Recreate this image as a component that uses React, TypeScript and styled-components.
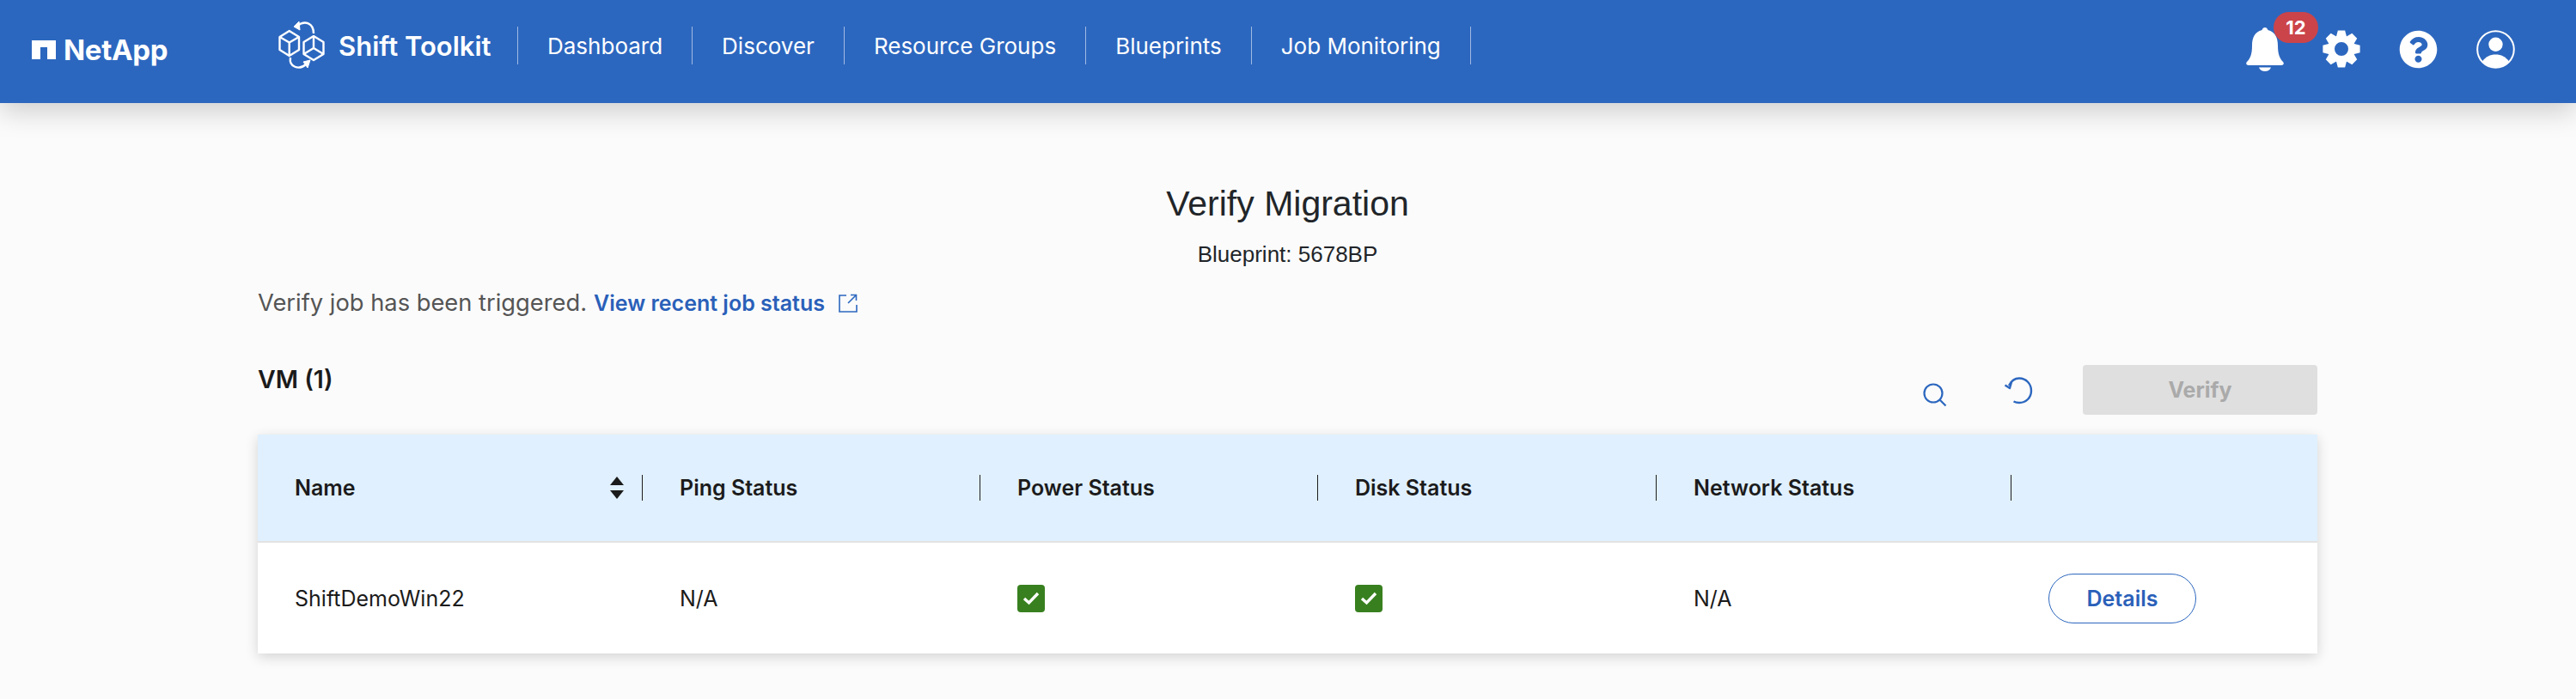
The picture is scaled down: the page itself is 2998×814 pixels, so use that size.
import React from "react";
import styled, { createGlobalStyle } from "styled-components";
import { FaQuestionCircle } from "react-icons/fa";

const BLUE = "#2c67bf";

const GlobalStyle = createGlobalStyle`
  html, body {
    margin: 0;
    padding: 0;
    background: #fbfbfb;
    font-family: Inter, "Liberation Sans", sans-serif;
  }
`;

const Header = styled.header`
  position: relative;
  display: flex;
  align-items: center;
  height: 120px;
  box-sizing: border-box;
  padding: 0 71px 14px 37px;
  background: ${BLUE};
  color: #fff;
  box-shadow: 0 10px 30px rgba(0, 0, 0, 0.18);
`;

const Logo = styled.div`
  display: flex;
  align-items: center;
  gap: 9px;
  width: 278px;
  margin-top: 10px;
`;

const LogoWord = styled.span`
  font-size: 33px;
  font-weight: 700;
  letter-spacing: -0.3px;
  line-height: 44px;
`;

const Brand = styled.div`
  display: flex;
  align-items: center;
  width: 287px;
  height: 44px;
  border-right: 1px solid rgba(255, 255, 255, 0.55);
`;

const BrandName = styled.span`
  margin-left: 4px;
  font-size: 31px;
  font-weight: 600;
  white-space: nowrap;
`;

const Nav = styled.nav`
  display: flex;
`;

const NavItem = styled.a`
  display: flex;
  align-items: center;
  height: 44px;
  padding: 0 34px;
  border-right: 1px solid rgba(255, 255, 255, 0.55);
  font-size: 26px;
  white-space: nowrap;
`;

const HeaderIcons = styled.div`
  display: flex;
  align-items: center;
  gap: 45px;
  margin-left: auto;
  padding-top: 8px;
`;

const BellWrap = styled.div`
  position: relative;
  display: flex;
`;

const Badge = styled.span`
  position: absolute;
  left: 32px;
  top: -18px;
  display: flex;
  align-items: center;
  justify-content: center;
  width: 52px;
  height: 36px;
  border-radius: 18px;
  background: #cb444a;
  font-size: 22px;
  font-weight: 700;
`;

const Main = styled.main`
  padding: 0 301px 54px 300px;
`;

const TitleBlock = styled.div`
  display: flex;
  flex-direction: column;
  align-items: center;
  padding-top: 90px;
`;

const Title = styled.h1`
  margin: 0;
  font-family: "Liberation Sans", Arial, sans-serif;
  font-size: 41px;
  font-weight: 400;
  line-height: 54px;
  color: #212529;
`;

const SubTitle = styled.div`
  margin-top: 17px;
  font-family: "Liberation Sans", Arial, sans-serif;
  font-size: 26px;
  line-height: 30px;
  color: #212529;
`;

const Notice = styled.div`
  display: flex;
  align-items: center;
  margin-top: 24px;
  font-size: 27.3px;
  line-height: 36px;
  color: #555;
`;

const JobLink = styled.a`
  margin-left: 8px;
  font-size: 25px;
  font-weight: 600;
  color: #2a60b9;
`;

const LinkIcon = styled.svg`
  margin-left: 16px;
`;

const ToolRow = styled.div`
  display: flex;
  justify-content: space-between;
  height: 82px;
  margin-top: 54px;
`;

const SectionName = styled.div`
  margin-top: -1px;
  font-size: 28.5px;
  font-weight: 600;
  line-height: 36px;
  color: #1b1b1b;
`;

const Tools = styled.div`
  display: flex;
  align-items: flex-start;
`;

const ToolIcon = styled.svg<{ $top: number; $right: number }>`
  margin-top: ${(p) => p.$top}px;
  margin-right: ${(p) => p.$right}px;
`;

const VerifyButton = styled.button`
  width: 273px;
  height: 58px;
  border: none;
  border-radius: 4px;
  background: #dfdfdf;
  color: #aaa;
  font-family: inherit;
  font-size: 25px;
  font-weight: 700;
`;

const Table = styled.div`
  margin-top: -1px;
  background: #fff;
  box-shadow: 0 4px 14px rgba(0, 0, 0, 0.16);
`;

const Row = styled.div<{ $head?: boolean }>`
  display: grid;
  grid-template-columns: 448px 393px 393px 394px 413px 1fr;
  align-items: center;
  box-sizing: border-box;
  height: ${(p) => (p.$head ? "126px" : "129px")};
  background: ${(p) => (p.$head ? "#e0f0fe" : "#fff")};
  border-bottom: ${(p) => (p.$head ? "2px solid #e3e3e3" : "none")};
`;

const HeadCell = styled.div`
  position: relative;
  display: flex;
  align-items: center;
  justify-content: space-between;
  box-sizing: border-box;
  height: 30px;
  padding: 0 20px 0 43px;
  border-right: 1px solid #1d1d1d;
  font-size: 25px;
  font-weight: 600;
  color: #1b1b1b;
`;

const LastHead = styled.div`
  height: 30px;
`;

const Cell = styled.div`
  display: flex;
  align-items: center;
  padding-left: 43px;
  font-size: 25px;
  color: #1b1b1b;
`;

const Check = styled.span`
  display: flex;
  align-items: center;
  justify-content: center;
  width: 32px;
  height: 32px;
  border-radius: 4px;
  background: #38801f;
`;

const DetailsButton = styled.button`
  width: 172px;
  height: 58px;
  border: 1.5px solid ${BLUE};
  border-radius: 29px;
  background: #fff;
  color: #2a60b9;
  font-family: inherit;
  font-size: 25px;
  font-weight: 600;
`;

const NAV = ["Dashboard", "Discover", "Resource Groups", "Blueprints", "Job Monitoring"];
const HEAD = ["Ping Status", "Power Status", "Disk Status", "Network Status"];

// 8 tooth gear outline, the hole is cut with evenodd
const gearPath = () => {
  const c = 22;
  const parts: string[] = [];
  for (let i = 0; i < 8; i++) {
    const a = (i * Math.PI) / 4 - Math.PI / 2;
    const pts = [
      [16, -0.38],
      [22, -0.19],
      [22, 0.19],
      [16, 0.38],
    ];
    pts.forEach(([r, d]) => {
      const x = c + r * Math.cos(a + d);
      const y = c + r * Math.sin(a + d);
      parts.push(`${x.toFixed(2)} ${y.toFixed(2)}`);
    });
  }
  return `M${parts.join("L")}Z M${c + 8} ${c}A8 8 0 1 0 ${c - 8} ${c}A8 8 0 1 0 ${c + 8} ${c}Z`;
};

const NetAppMark = () => (
  <svg width="28" height="22" viewBox="0 0 28 22">
    <path d="M0 0H28V22H18V8H10V22H0Z" fill="#fff" />
  </svg>
);

const ShiftMark = () => (
  <svg width="75" height="75" viewBox="0 0 75 75" fill="none" stroke="#fff" strokeWidth="2.4" strokeLinejoin="round">
    <path d="M21.7 20L33 27V42L21.7 49L10.5 42V27Z" />
    <path d="M10.5 27L21.7 33.5L33 27M21.7 33.5V49" />
    <path d="M50 26L61.5 33V47L50 54L38.5 47V33Z" />
    <path d="M50 26V40M38.5 47L50 40L61.5 47" />
    <path d="M31 14C40 7 50 11 50 23" />
    <path d="M27 15L33 9L34 19Z" fill="#fff" strokeWidth="1" />
    <path d="M23 51C21 62 33 66 41 59" />
    <path d="M46 54L38 56L43 63Z" fill="#fff" strokeWidth="1" />
  </svg>
);

const Bell = () => (
  <svg width="44" height="51" viewBox="0 0 44 51" fill="#fff">
    <path d="M22 0c2 0 3 1.5 3.5 3C34 5 37 12 37 21c0 10 2 15 6 19c1.5 1.5 1 4-2 4H3c-3 0-3.5-2.5-2-4c4-4 6-9 6-19C7 12 10 5 18.5 3C19 1.5 20 0 22 0Z" />
    <path d="M15 46.5h14c-1 3-4 4.5-7 4.5s-6-1.5-7-4.5Z" />
  </svg>
);

const User = () => (
  <svg width="45" height="45" viewBox="0 0 45 45" fill="#fff">
    <circle cx="22.5" cy="22.5" r="21.3" fill="none" stroke="#fff" strokeWidth="2" />
    <circle cx="22.5" cy="16.7" r="8.2" />
    <path d="M7 36.5C11 31 16 28.5 22.5 28.5S34 31 38 36.5A21 21 0 0 1 7 36.5Z" />
  </svg>
);

const SortArrows = () => (
  <svg width="18" height="26" viewBox="0 0 18 26" fill="#1b1b1b">
    <path d="M9 0L17 10H1Z" />
    <path d="M9 26L1 16H17Z" />
  </svg>
);

const CheckMark = () => (
  <svg width="20" height="16" viewBox="0 0 20 16" fill="none" stroke="#fff" strokeWidth="3.4">
    <path d="M2 8L7.5 13L18 2" />
  </svg>
);

export default function App() {
  return (
    <>
      <GlobalStyle />
      <Header>
        <Logo>
          <NetAppMark />
          <LogoWord>NetApp</LogoWord>
        </Logo>
        <Brand>
          <ShiftMark />
          <BrandName>Shift Toolkit</BrandName>
        </Brand>
        <Nav>
          {NAV.map((n) => (
            <NavItem key={n}>{n}</NavItem>
          ))}
        </Nav>
        <HeaderIcons>
          <BellWrap>
            <Bell />
            <Badge>12</Badge>
          </BellWrap>
          <svg width="44" height="44" viewBox="0 0 44 44">
            <path d={gearPath()} fill="#fff" fillRule="evenodd" />
          </svg>
          <FaQuestionCircle size={45} color="#fff" />
          <User />
        </HeaderIcons>
      </Header>
      <Main>
        <TitleBlock>
          <Title>Verify Migration</Title>
          <SubTitle>Blueprint: 5678BP</SubTitle>
        </TitleBlock>
        <Notice>
          Verify job has been triggered.
          <JobLink>View recent job status</JobLink>
          <LinkIcon width="22" height="22" viewBox="0 0 22 22" fill="none" stroke="#2c67bf" strokeWidth="1.6">
            <path d="M9 2H1V21H21V13" />
            <path d="M11 11L20 2M14 1.5H20.5V8" />
          </LinkIcon>
        </Notice>
        <ToolRow>
          <SectionName>VM (1)</SectionName>
          <Tools>
            <ToolIcon $top={21} $right={66} width="28" height="28" viewBox="0 0 28 28" fill="none" stroke="#2c67bf" strokeWidth="2.2">
              <circle cx="12" cy="12" r="10.5" />
              <path d="M19.5 19.5L26.5 26.5" />
            </ToolIcon>
            <ToolIcon $top={14} $right={58} width="34" height="32" viewBox="0 0 34 32" fill="none" stroke="#2c67bf" strokeWidth="2.4">
              <path d="M6 10C9 4 13 1.5 18 1.5C26 1.5 32 8 32 16C32 24 26 30 18 30C15.5 30 13.5 29.5 11.5 28.5" />
              <path d="M1.5 9.5L7 13L9 6" strokeLinejoin="round" />
            </ToolIcon>
            <VerifyButton>Verify</VerifyButton>
          </Tools>
        </ToolRow>
        <Table>
          <Row $head>
            <HeadCell>
              Name
              <SortArrows />
            </HeadCell>
            {HEAD.map((h) => (
              <HeadCell key={h}>{h}</HeadCell>
            ))}
            <LastHead />
          </Row>
          <Row>
            <Cell>ShiftDemoWin22</Cell>
            <Cell>N/A</Cell>
            <Cell>
              <Check>
                <CheckMark />
              </Check>
            </Cell>
            <Cell>
              <Check>
                <CheckMark />
              </Check>
            </Cell>
            <Cell>N/A</Cell>
            <Cell>
              <DetailsButton>Details</DetailsButton>
            </Cell>
          </Row>
        </Table>
      </Main>
    </>
  );
}
